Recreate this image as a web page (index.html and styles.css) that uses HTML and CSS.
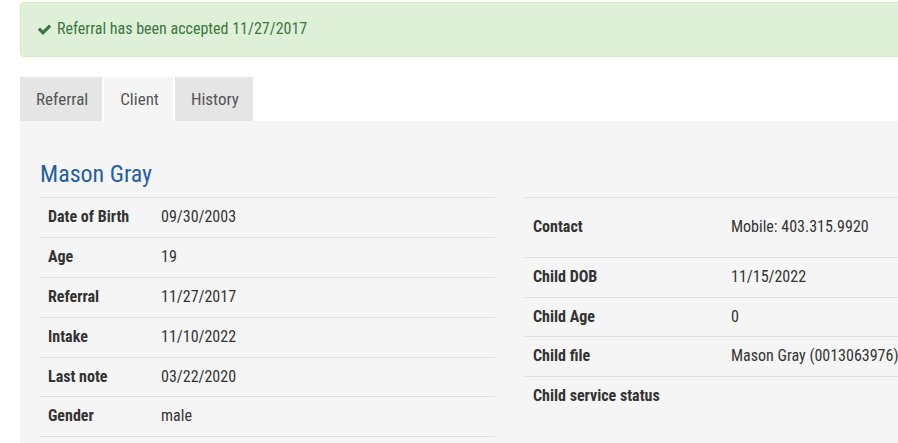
FILE: index.html
```html
<!DOCTYPE html>
<html lang="en">
<head>
<meta charset="utf-8">
<title>Client</title>
<link rel="stylesheet" href="styles.css">
</head>
<body>
<div class="page">
  <div class="alert">
    <svg class="check" viewBox="0 0 1792 1792" width="15" height="15" aria-hidden="true"><path fill="currentColor" d="M1671 566q0 40-28 68l-724 724-136 136q-28 28-68 28t-68-28l-136-136-362-362q-28-28-28-68t28-68l136-136q28-28 68-28t68 28l294 295 656-657q28-28 68-28t68 28l136 136q28 28 28 68z"/></svg>
    <span>Referral has been accepted 11/27/2017</span>
  </div>

  <ul class="tabs">
    <li class="tab">Referral</li>
    <li class="tab active">Client</li>
    <li class="tab">History</li>
  </ul>

  <div class="panel">
    <div class="cols">
      <div class="col">
        <h3 class="name">Mason Gray</h3>
        <table class="info info-left">
          <tr><th>Date of Birth</th><td>09/30/2003</td></tr>
          <tr><th>Age</th><td>19</td></tr>
          <tr><th>Referral</th><td>11/27/2017</td></tr>
          <tr><th>Intake</th><td>11/10/2022</td></tr>
          <tr><th>Last note</th><td>03/22/2020</td></tr>
          <tr><th>Gender</th><td>male</td></tr>
        </table>
      </div>
      <div class="col col-right">
        <table class="info info-right">
          <tr class="tall"><th>Contact</th><td>Mobile: 403.315.9920</td></tr>
          <tr><th>Child DOB</th><td>11/15/2022</td></tr>
          <tr><th>Child Age</th><td>0</td></tr>
          <tr><th>Child file</th><td>Mason Gray (0013063976)</td></tr>
          <tr class="last"><th>Child service status</th><td></td></tr>
        </table>
      </div>
    </div>
  </div>
</div>
</body>
</html>
```
FILE: styles.css
```css
* { box-sizing: border-box; }
html, body {
  margin: 0;
  padding: 0;
  background: #fff;
  overflow: hidden;
}
body {
  font-family: "Roboto Condensed", "Roboto", "Liberation Sans", sans-serif;
  font-stretch: condensed;
  font-size: 16px;
  line-height: 1.42857;
  color: #333;
}
.page {
  width: 1000px;
  padding: 2px 0 0 20px;
}
.alert {
  display: flex;
  align-items: center;
  gap: 5px;
  padding: 15px 16px;
  background: #dff0d8;
  border: 1px solid #d6e9c6;
  border-radius: 4px 0 0 4px;
  color: #3c763d;
  margin-bottom: 20px;
}
.check { display: block; }
.tabs {
  list-style: none;
  margin: 0;
  padding: 0;
  display: flex;
  gap: 2px;
}
.tab {
  padding: 10px 14px 10px 16px;
  font-size: 17px;
  line-height: 24px;
  background: #e5e5e5;
  color: #555;
  height: 44px;
}
.tab.active {
  background: #f5f5f5;
}
.panel {
  background: #f5f5f5;
  padding: 20px 20px 20px;
  height: 330px;
}
.cols {
  display: grid;
  grid-template-columns: 455px 455px;
  column-gap: 30px;
}
.name {
  margin: 20px 0 10px;
  font-size: 24px;
  font-weight: 400;
  line-height: 1.1;
  color: #1f5fa6;
}
.col-right {
  padding-top: 56px;
}
.info {
  width: 100%;
  border-collapse: collapse;
}
.info th, .info td {
  padding: 8px;
  border-top: 1px solid #ddd;
  text-align: left;
  vertical-align: middle;
}
.info-left {
  border-bottom: 1px solid #ddd;
}
.info th {
  font-weight: 700;
  color: #333;
}
.info td {
  font-weight: 400;
  color: #333;
}
.info-left th { width: 113px; }
.info-right th { width: 198px; }
.info-right td { white-space: nowrap; }
.info-right .tall th, .info-right .tall td {
  padding-top: 18px;
  padding-bottom: 18px;
}
.info-right .last th, .info-right .last td {
  padding-bottom: 50px;
  vertical-align: top;
}
```
